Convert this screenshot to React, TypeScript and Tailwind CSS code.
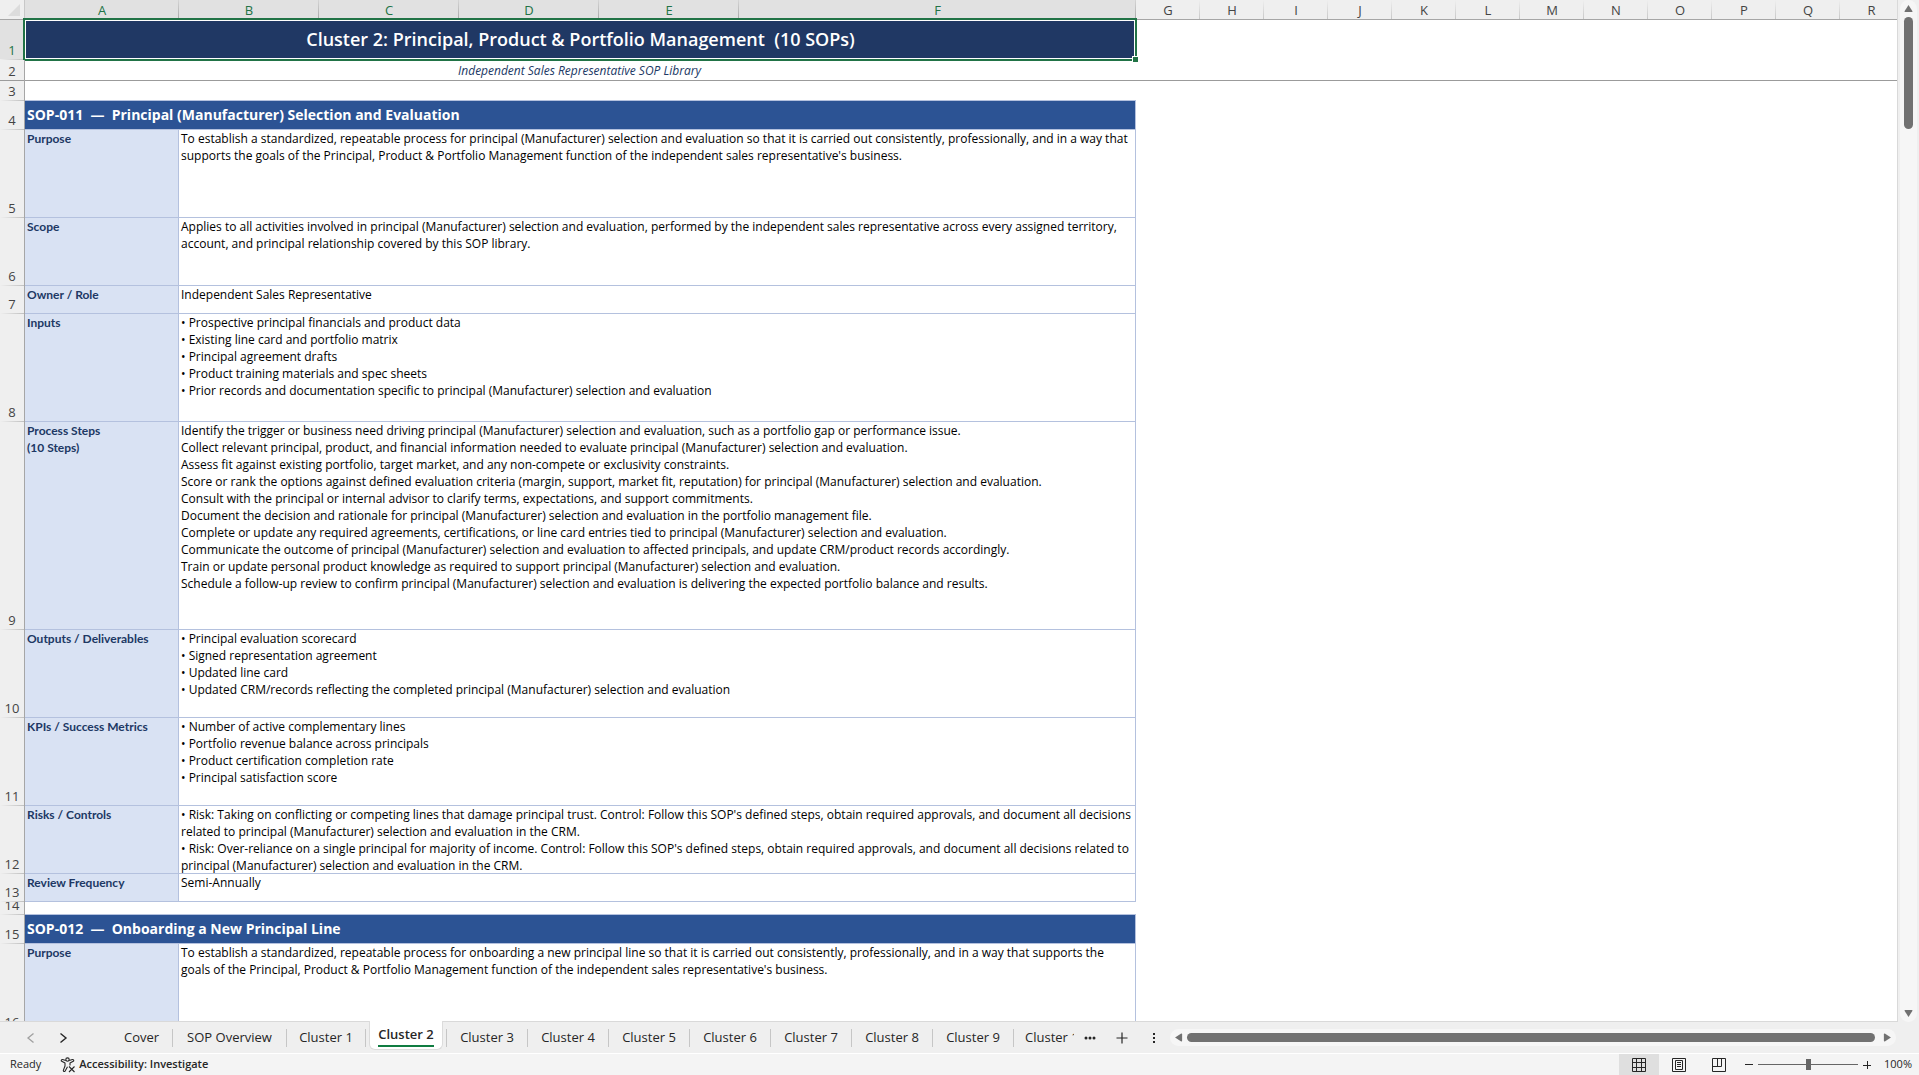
import { useState } from "react";
import { clsx } from "clsx";

type Row = { n: number; height: string; label: string; lines: string[] };

const COLUMNS = "ABCDEFGHIJKLMNOPQR".split("");

const SOP_011: Row[] = [
  {
    n: 5,
    height: "h-[88px]",
    label: "Purpose",
    lines: [
      "To establish a standardized, repeatable process for principal (Manufacturer) selection and evaluation so that it is carried out consistently, professionally, and in a way that",
      "supports the goals of the Principal, Product & Portfolio Management function of the independent sales representative's business.",
    ],
  },
  {
    n: 6,
    height: "h-[68px]",
    label: "Scope",
    lines: [
      "Applies to all activities involved in principal (Manufacturer) selection and evaluation, performed by the independent sales representative across every assigned territory,",
      "account, and principal relationship covered by this SOP library.",
    ],
  },
  { n: 7, height: "h-[28px]", label: "Owner / Role", lines: ["Independent Sales Representative"] },
  {
    n: 8,
    height: "h-[108px]",
    label: "Inputs",
    lines: [
      "• Prospective principal financials and product data",
      "• Existing line card and portfolio matrix",
      "• Principal agreement drafts",
      "• Product training materials and spec sheets",
      "• Prior records and documentation specific to principal (Manufacturer) selection and evaluation",
    ],
  },
  {
    n: 9,
    height: "h-[208px]",
    label: "Process Steps\n(10 Steps)",
    lines: [
      "Identify the trigger or business need driving principal (Manufacturer) selection and evaluation, such as a portfolio gap or performance issue.",
      "Collect relevant principal, product, and financial information needed to evaluate principal (Manufacturer) selection and evaluation.",
      "Assess fit against existing portfolio, target market, and any non-compete or exclusivity constraints.",
      "Score or rank the options against defined evaluation criteria (margin, support, market fit, reputation) for principal (Manufacturer) selection and evaluation.",
      "Consult with the principal or internal advisor to clarify terms, expectations, and support commitments.",
      "Document the decision and rationale for principal (Manufacturer) selection and evaluation in the portfolio management file.",
      "Complete or update any required agreements, certifications, or line card entries tied to principal (Manufacturer) selection and evaluation.",
      "Communicate the outcome of principal (Manufacturer) selection and evaluation to affected principals, and update CRM/product records accordingly.",
      "Train or update personal product knowledge as required to support principal (Manufacturer) selection and evaluation.",
      "Schedule a follow-up review to confirm principal (Manufacturer) selection and evaluation is delivering the expected portfolio balance and results.",
    ],
  },
  {
    n: 10,
    height: "h-[88px]",
    label: "Outputs / Deliverables",
    lines: [
      "• Principal evaluation scorecard",
      "• Signed representation agreement",
      "• Updated line card",
      "• Updated CRM/records reflecting the completed principal (Manufacturer) selection and evaluation",
    ],
  },
  {
    n: 11,
    height: "h-[88px]",
    label: "KPIs / Success Metrics",
    lines: [
      "• Number of active complementary lines",
      "• Portfolio revenue balance across principals",
      "• Product certification completion rate",
      "• Principal satisfaction score",
    ],
  },
  {
    n: 12,
    height: "h-[68px]",
    label: "Risks / Controls",
    lines: [
      "• Risk: Taking on conflicting or competing lines that damage principal trust. Control: Follow this SOP's defined steps, obtain required approvals, and document all decisions",
      "related to principal (Manufacturer) selection and evaluation in the CRM.",
      "• Risk: Over-reliance on a single principal for majority of income. Control: Follow this SOP's defined steps, obtain required approvals, and document all decisions related to",
      "principal (Manufacturer) selection and evaluation in the CRM.",
    ],
  },
  { n: 13, height: "h-[28px]", label: "Review Frequency", lines: ["Semi-Annually"] },
];

const SOP_012: Row[] = [
  {
    n: 16,
    height: "h-[88px]",
    label: "Purpose",
    lines: [
      "To establish a standardized, repeatable process for onboarding a new principal line so that it is carried out consistently, professionally, and in a way that supports the",
      "goals of the Principal, Product & Portfolio Management function of the independent sales representative's business.",
    ],
  },
];

const TABS = [
  { name: "Cover", width: "w-[62px]" },
  { name: "SOP Overview", width: "w-[114px]" },
  { name: "Cluster 1", width: "w-[79px]" },
  { name: "Cluster 2", width: "w-[81px]" },
  { name: "Cluster 3", width: "w-[81px]" },
  { name: "Cluster 4", width: "w-[81px]" },
  { name: "Cluster 5", width: "w-[81px]" },
  { name: "Cluster 6", width: "w-[81px]" },
  { name: "Cluster 7", width: "w-[81px]" },
  { name: "Cluster 8", width: "w-[81px]" },
  { name: "Cluster 9", width: "w-[81px]" },
];

function RowNumber({ n, selected, frozen }: { n: number; selected?: boolean; frozen?: boolean }) {
  return (
    <th
      scope="row"
      className={clsx(
        "relative border-r border-r-[#a6a6a6] p-0 font-normal",
        selected ? "bg-[#e1e1e1] text-[#217346]" : "bg-[#efefef] text-[#444444]",
      )}
    >
      <div className="absolute inset-0 flex items-end justify-center overflow-hidden pb-px text-[13px] leading-[18px]">
        {n}
      </div>
      <span
        className={clsx(
          "absolute inset-x-0 bottom-0 h-px",
          frozen ? "bg-[#9b9b9b]" : "bg-linear-to-r from-[#efefef] to-[#c0c0c0]",
        )}
      />
    </th>
  );
}

function TitleRow({ n, children }: { n: number; children: string }) {
  return (
    <tr className="h-[29px]">
      <RowNumber n={n} />
      <td
        colSpan={6}
        className="border-r border-b border-[#b4c1de] bg-[#2c5394] px-0.5 py-0 text-sm leading-5 font-bold whitespace-pre text-white"
      >
        {children}
      </td>
    </tr>
  );
}

function FieldRow({ row }: { row: Row }) {
  return (
    <tr className={row.height}>
      <RowNumber n={row.n} />
      <td className="border-r border-b border-[#b4c1de] bg-[#d9e2f3] px-0.5 py-0 align-top font-[Lato,sans-serif] text-xs leading-[17px] font-bold whitespace-pre-line text-[#203864]">
        {row.label}
      </td>
      <td
        colSpan={5}
        className="border-r border-b border-[#b4c1de] px-0.5 py-0 align-top text-xs leading-[17px] whitespace-nowrap text-black"
      >
        {/* a full row of text may sit on its bottom border */}
        <div className="-mb-px">
          {row.lines.map((line) => (
            <div key={line}>{line}</div>
          ))}
        </div>
      </td>
    </tr>
  );
}

function Sheet() {
  return (
    <table className="w-full table-fixed border-separate border-spacing-0">
      <colgroup>
        <col className="w-[25px]" />
        <col className="w-[154px]" />
        <col className="w-[140px]" />
        <col className="w-[140px]" />
        <col className="w-[140px]" />
        <col className="w-[140px]" />
        <col className="w-[397px]" />
        {COLUMNS.slice(6, 17).map((c) => (
          <col key={c} className="w-[64px]" />
        ))}
        <col />
      </colgroup>
      <thead>
        <tr className="h-5">
          <th className="border-r border-b border-r-[#c8c8c8] border-b-[#a6a6a6] bg-[#efefef] p-0">
            <svg viewBox="0 0 12 12" className="ml-2 h-3 w-3" aria-hidden>
              <path d="M12 0V12H0z" fill="#dcdcdc" />
            </svg>
          </th>
          {COLUMNS.map((c, i) => (
            <th
              key={c}
              scope="col"
              className={clsx(
                "relative border-b border-b-[#a6a6a6] py-0 pr-0 text-[13px] leading-[18px] font-normal",
                i < 6 ? "bg-[#e1e1e1] text-[#217346]" : "bg-[#efefef] text-[#444444]",
                i === 17 ? "pl-1.5" : "pl-0",
              )}
            >
              {c}
              {i < 17 && (
                <span
                  className={clsx(
                    "absolute inset-y-0 right-0 w-px",
                    i < 6
                      ? "bg-linear-to-b from-[#d5d5d5] to-[#a9a9a9]"
                      : "bg-linear-to-b from-[#efefef] to-[#c8c8c8]",
                  )}
                />
              )}
            </th>
          ))}
        </tr>
      </thead>
      <tbody>
        <tr className="h-10">
          <RowNumber n={1} selected />
          <td
            colSpan={6}
            className="relative bg-[#203864] px-0 pt-0 pb-0.5 text-center text-lg leading-6 font-semibold whitespace-pre text-white"
          >
            Cluster 2: Principal, Product &amp; Portfolio Management{"  "}(10 SOPs)
            {/* active cell outline and fill handle */}
            <span className="absolute -top-0.5 -right-px -bottom-px -left-0.5 border-2 border-[#217346]">
              <span className="absolute inset-0 border border-white" />
            </span>
            <span className="absolute -right-0.5 -bottom-0.5 h-[6px] w-[6px] border-t border-l border-white bg-[#217346]" />
          </td>
        </tr>
        <tr className="h-[21px]">
          <RowNumber n={2} frozen />
          <td
            colSpan={6}
            className="border-b border-[#9b9b9b] py-0 pr-0.5 pl-0 text-center text-xs leading-[17px] text-[#203864] italic"
          >
            Independent Sales Representative SOP Library
          </td>
          <td colSpan={12} className="border-b border-[#9b9b9b] p-0" />
        </tr>
        <tr className="h-5">
          <RowNumber n={3} />
          <td colSpan={6} className="border-b border-[#b4c1de] p-0" />
        </tr>
        <TitleRow n={4}>{"SOP-011  —  Principal (Manufacturer) Selection and Evaluation"}</TitleRow>
        {SOP_011.map((row) => (
          <FieldRow key={row.n} row={row} />
        ))}
        <tr className="h-[13px]">
          <RowNumber n={14} />
          <td colSpan={6} className="border-b border-[#b4c1de] p-0" />
        </tr>
        <TitleRow n={15}>{"SOP-012  —  Onboarding a New Principal Line"}</TitleRow>
        {SOP_012.map((row) => (
          <FieldRow key={row.n} row={row} />
        ))}
      </tbody>
    </table>
  );
}

function Arrow({ label, d }: { label: string; d: string }) {
  return (
    <button aria-label={label} className="shrink-0">
      <svg viewBox="0 0 10 10" className="block h-[9px] w-[9px]" fill="#717171">
        <path d={d} />
      </svg>
    </button>
  );
}

function VerticalScrollbar() {
  return (
    <div className="flex w-[21px] shrink-0 justify-center bg-[#efefef]">
      <div className="flex w-[17px] flex-col items-center rounded-full bg-[#f6f6f6] pt-1 pb-1">
        <Arrow label="Scroll up" d="M5 1.2 9.4 8Q9.6 9 8.6 9H1.4Q.4 9 .6 8z" />
        <div className="mt-1 h-28 w-[9px] rounded-full bg-[#717171]" />
        <div className="flex-1" />
        <Arrow label="Scroll down" d="M5 8.8.6 2Q.4 1 1.4 1H8.6Q9.6 1 9.4 2z" />
      </div>
    </div>
  );
}

function HorizontalScrollbar() {
  return (
    <div className="mr-[23px] ml-3.5 flex h-[17px] min-w-0 flex-1 items-center rounded-full bg-[#f6f6f6] px-1">
      <Arrow label="Scroll left" d="M1.2 5 8 .6Q9 .4 9 1.4V8.6Q9 9.6 8 9.4z" />
      <div className="mr-2 ml-1 h-[9px] flex-1 rounded-full bg-[#717171]" />
      <Arrow label="Scroll right" d="M8.8 5 2 .6Q1 .4 1 1.4V8.6Q1 9.6 2 9.4z" />
    </div>
  );
}

function SheetTabs() {
  const [active, setActive] = useState("Cluster 2");
  return (
    <div className="flex h-[31px] shrink-0 items-center bg-[#efefef] text-[13px] text-[#262626]">
      <div className="flex w-[111px] shrink-0 items-center gap-5 pl-[25px]">
        <button aria-label="Previous sheets" className="text-[#a0a0a0]">
          <svg viewBox="0 0 12 12" className="h-3 w-3" fill="none" stroke="currentColor" strokeWidth="1.3">
            <path d="M8.5 1.5 3 6l5.5 4.5" />
          </svg>
        </button>
        <button aria-label="Next sheets" className="text-[#262626]">
          <svg viewBox="0 0 12 12" className="h-3 w-3" fill="none" stroke="currentColor" strokeWidth="1.4">
            <path d="M3.5 1.5 9 6l-5.5 4.5" />
          </svg>
        </button>
      </div>
      <nav className="flex h-full shrink-0 items-center">
        {TABS.map((t) =>
          t.name === active ? (
            <div key={t.name} className={clsx("flex h-full items-center", t.width)}>
              <button
                aria-current="page"
                className="mx-auto -mt-px h-[29px] self-start rounded-b-md border border-t-0 border-[#dcdcdc] bg-white px-2 font-semibold text-[#262626]"
              >
                <span className="block border-b-2 border-[#107c41] leading-[22px]">{t.name}</span>
              </button>
              <span className="h-[18px] w-px bg-[#c6c6c6]" />
            </div>
          ) : (
            <button
              key={t.name}
              onClick={() => setActive(t.name)}
              className={clsx("h-[18px] border-r border-[#c6c6c6] leading-[17px] whitespace-nowrap", t.width)}
            >
              {t.name}
            </button>
          ),
        )}
        <button className="ml-[11px] w-[49px] overflow-hidden text-left whitespace-nowrap">Cluster 10</button>
      </nav>
      <button aria-label="More sheets" className="ml-2.5 shrink-0">
        <svg viewBox="0 0 12 4" className="h-1 w-3" fill="#262626">
          <circle cx="2" cy="2" r="1.5" />
          <circle cx="6" cy="2" r="1.5" />
          <circle cx="10" cy="2" r="1.5" />
        </svg>
      </button>
      <button aria-label="New sheet" className="ml-5 shrink-0">
        <svg viewBox="0 0 12 12" className="h-3 w-3" stroke="#262626" strokeWidth="1.2">
          <path d="M6 .5v11M.5 6h11" />
        </svg>
      </button>
      <span className="ml-6 shrink-0" aria-hidden>
        <svg viewBox="0 0 4 12" className="h-3 w-1" fill="#262626">
          <path d="M1 1h2v2H1zM1 5h2v2H1zM1 9h2v2H1z" />
        </svg>
      </span>
      <HorizontalScrollbar />
    </div>
  );
}

function StatusBar() {
  const [zoom, setZoom] = useState(100);
  return (
    <footer className="flex h-[22px] shrink-0 items-center border-t border-white bg-[#f4f4f4] text-[11px] text-[#262626]">
      <span className="pl-2.5">Ready</span>
      <button className="ml-[19px] flex items-center gap-[3px] font-semibold">
        <svg viewBox="0 0 16 16" className="h-4 w-4" fill="none" stroke="#262626" strokeWidth="1.1" strokeLinejoin="round">
          <circle cx="7.5" cy="2.6" r="1.7" />
          <path d="M5.8 3.6 2.6 2.5Q1 2.4 1.3 4L5 6v3L3.3 13.4Q3.6 15 5 14.2L7.5 9.8M9.2 3.6l3.2-1.1q1.6-.1 1.3 1.5L10 6v2.4" />
          <path d="m9 9.5 5.5 5.5M14.5 9.5 9 15" />
        </svg>
        Accessibility: Investigate
      </button>
      <div className="ml-auto flex h-full items-center">
        <button aria-label="Normal view" aria-pressed="true" className="flex h-full w-10 items-center justify-center bg-[#dfdfdf]">
          <svg viewBox="0 0 14 14" className="h-3.5 w-3.5" fill="none" stroke="#262626">
            <path d="M.5 .5h13v13H.5zM.5 4.5h13M.5 9.5h13M4.5 .5v13M9.5 .5v13" />
          </svg>
        </button>
        <button aria-label="Page layout view" className="flex h-full w-10 items-center justify-center">
          <svg viewBox="0 0 14 14" className="h-3.5 w-3.5" fill="none" stroke="#262626">
            <path d="M.5 .5h13v13H.5zM3.5 2.5h7v9h-7zM5 4.5h4M5 6.5h4M5 8.5h4" />
          </svg>
        </button>
        <button aria-label="Page break preview" className="flex h-full w-10 items-center justify-center">
          <svg viewBox="0 0 14 14" className="h-3.5 w-3.5" fill="none" stroke="#262626">
            <path d="M.5 .5h13v13H.5zM.5 8.5h9v-8M5.5 .5v8" />
          </svg>
        </button>
        <button aria-label="Zoom out" className="ml-1.5" onClick={() => setZoom(zoom - 10)}>
          <svg viewBox="0 0 8 8" className="h-2 w-2" stroke="#262626">
            <path d="M0 3.5h8" />
          </svg>
        </button>
        <input
          type="range"
          aria-label="Zoom"
          min={10}
          max={190}
          value={zoom}
          onChange={(e) => setZoom(Number(e.target.value))}
          className="mx-[5px] h-3 w-[100px] appearance-none bg-linear-to-r from-[#666666] to-[#666666] bg-[length:100%_1px] bg-center bg-no-repeat [&::-webkit-slider-thumb]:h-[11px] [&::-webkit-slider-thumb]:w-[5px] [&::-webkit-slider-thumb]:appearance-none [&::-webkit-slider-thumb]:bg-[#666666]"
        />
        <button aria-label="Zoom in" onClick={() => setZoom(zoom + 10)}>
          <svg viewBox="0 0 8 8" className="h-2 w-2" stroke="#262626">
            <path d="M0 4.5h8M4.5 0v8" />
          </svg>
        </button>
        <button className="mr-[7px] ml-[13px]">{zoom}%</button>
      </div>
    </footer>
  );
}

export default function App() {
  return (
    <div className="flex h-screen flex-col overflow-hidden bg-[#efefef] font-['Open_Sans',sans-serif]">
      <main className="flex min-h-0 flex-1">
        <div className="min-w-0 flex-1 overflow-hidden border-r border-b border-[#d9d9d9] bg-white">
          <Sheet />
        </div>
        <VerticalScrollbar />
      </main>
      <SheetTabs />
      <StatusBar />
    </div>
  );
}
